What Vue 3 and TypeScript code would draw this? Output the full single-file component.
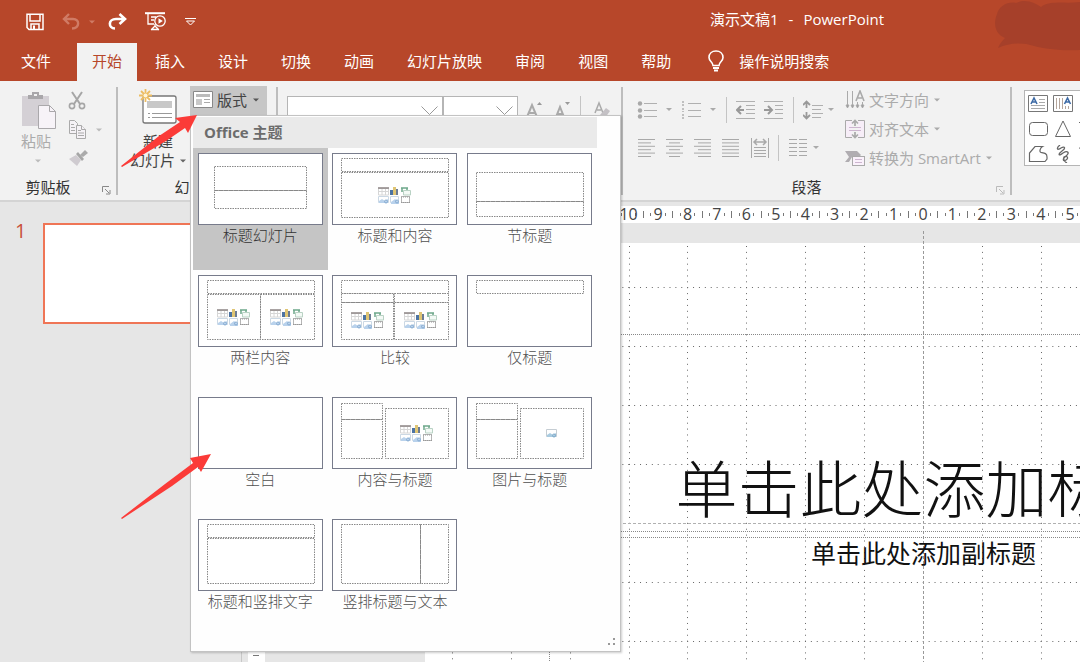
<script setup lang="ts">
import { ref } from 'vue'

type Box = [x: number, y: number, width: number, height: number]

interface SlideLayout {
  name: string
  boxes: Box[]
  media?: [number, number][]
  picture?: [number, number]
}

const tabs = ['文件', '开始', '插入', '设计', '切换', '动画', '幻灯片放映', '审阅', '视图', '帮助']
const activeTab = ref('开始')

const layouts: SlideLayout[] = [
  { name: '标题幻灯片', boxes: [[16, 13, 92, 24], [16, 37, 92, 18]] },
  { name: '标题和内容', boxes: [[9, 5, 107, 13], [9, 19, 107, 45]], media: [[46, 34]] },
  { name: '节标题', boxes: [[9, 19, 107, 29], [9, 48, 107, 15]] },
  { name: '两栏内容', boxes: [[9, 5, 107, 13], [9, 19, 53, 45], [62, 19, 54, 45]], media: [[19, 34], [72, 34]] },
  {
    name: '比较',
    boxes: [[9, 5, 107, 13], [9, 18, 52, 9], [62, 18, 54, 9], [9, 27, 52, 37], [62, 27, 54, 37]],
    media: [[19, 37], [72, 37]],
  },
  { name: '仅标题', boxes: [[9, 5, 107, 13]] },
  { name: '空白', boxes: [] },
  { name: '内容与标题', boxes: [[9, 6, 41, 16], [9, 22, 41, 39], [53, 11, 63, 50]], media: [[68, 28]] },
  { name: '图片与标题', boxes: [[9, 6, 41, 16], [9, 22, 41, 39], [53, 11, 63, 50]], picture: [79, 32] },
  { name: '标题和竖排文字', boxes: [[9, 5, 107, 13], [9, 19, 107, 45]] },
  { name: '竖排标题与文本', boxes: [[9, 5, 79, 59], [88, 5, 28, 59]] },
]
const selectedLayout = ref('标题幻灯片')

const slideWidth = 997
const slideHeight = 561
const centimetre = slideWidth / 33.867
const centreX = slideWidth / 2
const centreY = slideHeight / 2

const marks = (reach: number): number[] => Array.from({ length: reach * 2 + 1 }, (_, i) => i - reach)
const numbers = marks(10).filter((n) => n < 6)
const ticks = marks(64).filter((n) => n % 4 !== 0)
const columns = marks(8).filter((n) => n !== 0)
const rows = marks(4).filter((n) => n !== 0)
const snap = (n: number): number => Math.floor(n) + 0.5

const alignments = [
  { name: '左对齐', lines: [[1, 18], [1, 14], [1, 18], [1, 14], [1, 18], [1, 14]] },
  { name: '居中', lines: [[1, 18], [4, 15], [1, 18], [4, 15], [1, 18], [4, 15]] },
  { name: '右对齐', lines: [[1, 18], [5, 18], [1, 18], [5, 18], [1, 18], [5, 18]] },
  { name: '两端对齐', lines: [[1, 18], [1, 18], [1, 18], [1, 18], [1, 18], [1, 18]] },
]
const linePath = (lines: number[][]): string =>
  lines.map(([from, to], i) => `M${from} ${1.5 + i * 3.4}H${to}`).join('')
</script>

<template>
  <div class="app" lang="zh-CN">
    <header class="top">
      <svg class="stain" width="100" height="54" viewBox="0 0 100 54" aria-hidden="true">
        <path d="M17 14C19 6 28 1 36 3C45 -2 56 3 61 7C70 0 84 4 100 2V50C82 51 66 49 54 46C42 42 29 43 18 48C20 43 23 40 25 38C15 34 13 24 17 14Z" fill="#a6402a" />
      </svg>
      <div class="titlebar">
        <div class="quick">
          <button class="plain" aria-label="保存">
            <svg width="18" height="18" viewBox="0 0 18 18" fill="none" stroke="#fff" stroke-width="1.5"><path d="M1 1.200H17V16.500H3L1 14.500Z" /><path d="M4 1.500V8H14V1.500M5 16V11H13V16" /><path d="M8 12.500V16" stroke-width="2" /></svg>
          </button>
          <span class="split undo">
            <button class="plain" aria-label="撤消">
              <svg width="18" height="17" viewBox="0 0 18 17" fill="none" stroke="#d07b65" stroke-width="2.400"><path d="M7 1L2 6L7 11M2 6H11C18 6 18 15 10 15.500" /></svg>
            </button>
            <svg class="caret" width="6" height="4" viewBox="0 0 8 4"><path d="M0 0H8L4 4Z" fill="#d07b65" /></svg>
          </span>
          <button class="plain redo" aria-label="恢复">
            <svg width="19" height="17" viewBox="0 0 19 17" fill="none" stroke="#fff" stroke-width="2.600"><path d="M11.500 1L17 6L11.500 11M17 6H8C0 6 0 15 7 15.500" /></svg>
          </button>
          <button class="plain show" aria-label="从头开始放映">
            <svg width="22" height="19" viewBox="0 0 22 19" fill="none" stroke="#fff" stroke-width="1.300"><path d="M0 1.200H20" stroke-width="2" /><path d="M3 2V12H9M6 5H11M6 8H9M10 12V14L6 18M10 14L14 18M6 17.500H14" /><circle cx="15" cy="9" r="5.200" /><path d="M13.500 6.200L17.800 9L13.500 11.800Z" fill="#fff" stroke="none" /></svg>
          </button>
          <button class="plain more" aria-label="自定义快速访问工具栏">
            <svg width="11" height="8" viewBox="0 0 11 8" fill="none" stroke="#fff"><path d="M0 .500H11M1.500 3L5.500 7L9.500 3Z" /></svg>
          </button>
        </div>
        <h1 class="doc"><span>演示文稿1</span><span>-</span><span>PowerPoint</span></h1>
      </div>
      <nav class="tabs">
        <button v-for="tab in tabs" :key="tab" class="tab" :class="{ active: tab === activeTab }" @click="activeTab = tab">{{ tab }}</button>
        <button class="tell">
          <svg width="16" height="22" viewBox="0 0 16 22" fill="none" stroke="#fff" stroke-width="1.600"><path d="M5 15.500C5 12 1 11.500 1 7.500C1 3.500 4 1 8 1S15 3.500 15 7.500C15 11.500 11 12 11 15.500Z" /><path d="M5 18H11M6 20.500H10" stroke-width="2" /></svg>
          操作说明搜索
        </button>
      </nav>
    </header>

    <section class="ribbon" aria-label="开始">
      <div class="group clipboard">
        <div class="body">
          <button class="plain paste">
            <svg width="36" height="40" viewBox="0 0 36 40"><path d="M1 5H28V35H1Z" fill="#d4d0d5" /><path d="M7 4H11V1H18V4H22V8H7Z" fill="#a9a7aa" /><path d="M13 3H16V5H13Z" fill="#f2f2f2" /><path d="M17.500 14.500H28.500L34.500 20.500V37.500H17.500Z" fill="#f7f3f8" stroke="#aaa8ab" /><path d="M28.500 14.500V20.500H34.500" fill="none" stroke="#aaa8ab" /></svg>
            <span>粘贴</span>
            <svg class="caret" width="6" height="4" viewBox="0 0 8 4"><path d="M0 0H8L4 4Z" fill="#bbb" /></svg>
          </button>
          <div class="edits">
            <button class="plain" aria-label="剪切"><svg width="18" height="19" viewBox="0 0 18 19" fill="none" stroke="#a6a6a6" stroke-width="1.600"><path d="M4 1L12 13M14 1L6 13" stroke-width="2" /><circle cx="4" cy="15" r="2.600" /><circle cx="14" cy="15" r="2.600" /></svg></button>
            <span class="split copy">
              <button class="plain" aria-label="复制"><svg width="18" height="19" viewBox="0 0 18 19" fill="#f5f2f6" stroke="#aaa"><path d="M1.500 .500H6.500L9.500 3.500V13.500H1.500Z" /><path d="M3 4.500H6M3 7.500H7M3 10.500H7" /><path d="M8.500 5.500H13.500L17.500 9.500V18.500H8.500Z" /><path d="M13.500 5.500V9.500H17.500M10 10.500H13M10 13H16M10 15.500H16" /></svg></button>
              <svg class="caret" width="6" height="4" viewBox="0 0 8 4"><path d="M0 0H8L4 4Z" fill="#bbb" /></svg>
            </span>
            <button class="plain" aria-label="格式刷"><svg width="20" height="18" viewBox="0 0 20 18"><path d="M1 10L8 6L13 11L9 17Z" fill="#cfcbd0" /><path d="M8 5L10 3L16 10L14 12Z" fill="#a6a6a6" /><path d="M12 6L17 1L20 4L15 8Z" fill="#aaa" /></svg></button>
          </div>
        </div>
        <div class="caption">剪贴板<button class="plain launcher" aria-label="剪贴板选项"><svg width="9" height="9" viewBox="0 0 9 9" fill="none" stroke="#888"><path d="M.500 6V.500H7M3 3L7 7M8 4V8H4" /></svg></button></div>
      </div>
      <div class="divider"></div>

      <div class="group slides">
        <div class="body">
          <button class="plain new">
            <svg width="40" height="36" viewBox="0 0 40 36"><rect x="5" y="7" width="33" height="27" rx="2" fill="#fff" stroke="#777" stroke-width="1.300" /><path d="M9 12H34V19H9Z" fill="#c8c8c8" /><path d="M10 24.500H12M14 24.500H34M10 28.500H12M14 28.500H34" stroke="#999" /><path d="M7.500 0V13M1 6.500H14M3 2L12 11M12 2L3 11" stroke="#edbd62" stroke-width="1.800" /><circle cx="7.500" cy="6.500" r="2" fill="#fff5d9" /></svg>
            <span>新建</span>
            <span class="split">幻灯片<svg class="caret" width="6" height="4" viewBox="0 0 8 4"><path d="M0 0H8L4 4Z" fill="#666" /></svg></span>
          </button>
          <div class="layout">
            <button class="layout-button" aria-haspopup="true" aria-expanded="true">
              <svg width="20" height="17" viewBox="0 0 20 17"><path d="M.500 .500H19.500V16.500H.500Z" fill="#fff" stroke="#888" /><path d="M3 3H17V6H3Z" fill="#bbb" /><path d="M3 8H9V14H3Z" fill="#c8c8c8" /><path d="M11 8.500H17M11 11.500H17" stroke="#aaa" /></svg>
              版式
              <svg class="caret" width="6" height="4" viewBox="0 0 8 4"><path d="M0 0H8L4 4Z" fill="#555" /></svg>
            </button>
            <div class="popup">
              <h2 class="theme">Office 主题</h2>
              <div class="gallery">
                <button v-for="item in layouts" :key="item.name" class="choice" :class="{ selected: item.name === selectedLayout }" @click="selectedLayout = item.name">
                  <svg class="preview" width="125" height="72" viewBox="0 0 125 72">
                    <rect x=".500" y=".500" width="124" height="71" fill="#fff" stroke="#777b8b" />
                    <g fill="none" stroke="#888" stroke-dasharray="1.500 1">
                      <rect v-for="(box, i) in item.boxes" :key="i" :x="box[0] + 0.5" :y="box[1] + 0.5" :width="box[2]" :height="box[3]" />
                    </g>
                    <g v-for="(spot, i) in item.media" :key="'m' + i" :transform="`translate(${spot[0]} ${spot[1]})`" fill="none">
                      <path d="M.500 1.500H10.500V8H.500ZM.500 4.500H10.500M4 2V8M7.500 2V8" stroke="#d6d6d6" /><path d="M0 1H11" stroke="#8d8584" stroke-width="1.500" />
                      <path d="M13.500 3V8" stroke="#4d74a3" stroke-width="3" /><path d="M16.500 0V8" stroke="#dfc574" stroke-width="3" /><path d="M19 2V8" stroke="#6c7c94" stroke-width="2" />
                      <path d="M25.500 3.500H32.500V8H25.500Z" fill="#f4faf6" stroke="#b9d2c4" /><path d="M23 1H30M24 1V5M29 1V3" stroke="#6ea88b" stroke-width="1.500" />
                      <path d="M.500 9.500H10.500V15.500H.500ZM12.500 9.500H20.500V15.500H12.500Z" stroke="#cbd8e4" /><path d="M1 14L4 12L7 14L10 12V16H1ZM13 15L17 12L21 15V17H13Z" fill="#b9d2ec" /><circle cx="8" cy="14.500" r="1.500" stroke="#86abd0" /><circle cx="19" cy="14.500" r="1.500" stroke="#86abd0" />
                      <path d="M23.500 9.500H31.500V15.500H23.500Z" stroke="#b5b5b5" /><path d="M23 10H32M23 15.500H32" stroke="#999" stroke-dasharray="1 1" />
                    </g>
                    <g v-if="item.picture" :transform="`translate(${item.picture[0]} ${item.picture[1]})`" fill="none"><path d="M.500 .500H10.500V7.500H.500Z" stroke="#c5cdd3" /><path d="M1 6L4 4L7 6L10 4V8H1Z" fill="#a9cbe0" /><circle cx="8" cy="6.500" r="1.500" stroke="#7da9c9" /></g>
                  </svg>
                  <span>{{ item.name }}</span>
                </button>
              </div>
              <svg class="grip" width="8" height="8" viewBox="0 0 8 8"><path d="M6 0H8V2H6ZM6 5H8V7H6ZM1 5H3V7H1Z" fill="#999" /></svg>
            </div>
          </div>
        </div>
        <div class="caption">幻灯片</div>
      </div>
      <div class="divider"></div>

      <div class="group font">
        <div class="body">
          <span class="combo family"><select aria-label="字体"><option></option></select><svg width="17" height="9" viewBox="0 0 17 9" fill="none" stroke="#999"><path d="M.500 .500L8.500 8.500L16.500 .500" /></svg></span>
          <span class="combo size"><select aria-label="字号"><option></option></select><svg width="17" height="9" viewBox="0 0 17 9" fill="none" stroke="#999"><path d="M.500 .500L8.500 8.500L16.500 .500" /></svg></span>
          <button class="plain grow" aria-label="增大字号"><svg width="16" height="18" viewBox="0 0 16 18" fill="none" stroke="#aaa" stroke-width="2"><path d="M1 16L6 4L11 16M3 12H9" /><path d="M11 4L13.500 1L16 4Z" fill="#999" stroke="none" /></svg></button>
          <button class="plain shrink" aria-label="减小字号"><svg width="16" height="18" viewBox="0 0 16 18" fill="none" stroke="#aaa" stroke-width="2"><path d="M1 16L5 6L9 16M3 13H7" /><path d="M10 1H15L12.500 4Z" fill="#999" stroke="none" /></svg></button>
          <i class="bar"></i>
          <button class="plain clear" aria-label="清除所有格式"><svg width="18" height="18" viewBox="0 0 18 18" fill="none" stroke="#aaa" stroke-width="1.500"><path d="M1 12L5 2L9 12M3 9H7" /><path d="M6 14L12 7L16 10L11 17H8Z" fill="#c4c1c5" stroke="none" /></svg></button>
        </div>
      </div>
      <div class="divider"></div>

      <div class="group paragraph">
        <div class="body">
          <div class="tools">
            <div class="tool-row">
              <button class="plain" aria-label="项目符号"><svg width="20" height="20" viewBox="0 0 20 20" stroke="#b0b0b0"><path d="M7 3.500H20M7 10.500H20M7 16.500H20" /><g fill="#a8a8a8" stroke="none"><circle cx="3" cy="3.500" r="2.200" /><circle cx="3" cy="10.500" r="2.200" /><circle cx="3" cy="16.500" r="2.200" /></g></svg></button>
              <svg class="caret" width="8" height="4" viewBox="0 0 8 4"><path d="M1 0H7L4 3Z" fill="#aaa" /></svg>
              <button class="plain" aria-label="编号"><svg width="20" height="20" viewBox="0 0 20 20" stroke="#b0b0b0"><path d="M7 3.500H20M7 10.500H20M7 16.500H20" /><path d="M2 1V6M2 8V12M2 14V19" stroke-width="1.500" stroke-dasharray="2 1" /></svg></button>
              <svg class="caret" width="8" height="4" viewBox="0 0 8 4"><path d="M1 0H7L4 3Z" fill="#aaa" /></svg>
              <i class="bar"></i>
              <button class="plain" aria-label="降低列表级别"><svg width="20" height="20" viewBox="0 0 20 20" fill="none" stroke="#b0b0b0"><path d="M0 1.500H19M10 5.500H19M10 9.500H19M10 13.500H19M0 18.500H19" /><path d="M8 10H1M5 6L1 10L5 14" stroke="#999" stroke-width="2" /></svg></button>
              <button class="plain" aria-label="提高列表级别"><svg width="20" height="20" viewBox="0 0 20 20" fill="none" stroke="#b0b0b0"><path d="M0 1.500H19M11 5.500H19M11 9.500H19M11 13.500H19M0 18.500H19" /><path d="M0 10H8M4 6L8 10L4 14" stroke="#999" stroke-width="2" /></svg></button>
              <i class="bar"></i>
              <span class="split tight">
                <button class="plain" aria-label="行距"><svg width="20" height="20" viewBox="0 0 20 20" fill="none" stroke="#b0b0b0"><path d="M9 5.500H20M9 9.500H18M9 13.500H20M9 17.500H18" /><path d="M3.500 2V8M0 5L3.500 1.500L7 5M3.500 12V18M0 15L3.500 18.500L7 15" stroke="#999" stroke-width="1.800" /></svg></button>
                <svg class="caret" width="8" height="4" viewBox="0 0 8 4"><path d="M1 0H7L4 3Z" fill="#aaa" /></svg>
              </span>
            </div>
            <div class="tool-row">
              <button v-for="a in alignments" :key="a.name" class="plain" :aria-label="a.name"><svg width="20" height="20" viewBox="0 0 20 20" stroke="#a9a9a9"><path :d="linePath(a.lines)" /></svg></button>
              <button class="plain" aria-label="分散对齐"><svg width="20" height="20" viewBox="0 0 20 20" fill="none" stroke="#a9a9a9"><path d="M2.500 0V20M19.500 0V20M5 9.500H17M5 12.500H17M5 15.500H17M5 18.500H17" /><path d="M5 4H17M8 1L5 4L8 7M14 1L17 4L14 7" stroke-width="1.500" /></svg></button>
              <i class="bar"></i>
              <span class="split tight">
                <button class="plain" aria-label="分栏"><svg width="20" height="20" viewBox="0 0 20 20" stroke="#a9a9a9"><path d="M1 1.500H9M11 1.500H19M1 5.500H9M11 5.500H19M1 9.500H9M11 9.500H19M1 13.500H9M11 13.500H19M1 17.500H9M11 17.500H19" /></svg></button>
                <svg class="caret" width="8" height="4" viewBox="0 0 8 4"><path d="M1 0H7L4 3Z" fill="#aaa" /></svg>
              </span>
            </div>
          </div>
          <div class="texts">
            <button class="plain text-tool"><svg width="20" height="20" viewBox="0 0 20 20" fill="none" stroke="#aaa"><path d="M2.500 1V17M7.500 1V17M12.500 12V17M17.500 12V17" /><path d="M1 15L2.500 18L4 15ZM6 15L7.500 18L9 15ZM11 15L12.500 18L14 15ZM16 15L17.500 18L19 15Z" fill="#999" /><path d="M11 11L15 1L19 11M13 8H17" stroke-width="1.600" /></svg>文字方向<svg class="caret" width="6" height="4" viewBox="0 0 8 4"><path d="M0 0H8L4 4Z" fill="#aaa" /></svg></button>
            <button class="plain text-tool"><svg width="20" height="20" viewBox="0 0 20 20" fill="none" stroke="#aaa"><path d="M7 1.500H.500V18.500H7M13 1.500H19.500V18.500H13" fill="#f7eef8" /><path d="M4 8.500H16M4 11.500H16" stroke="#cdb6cf" /><path d="M10 7V2M7 4.500L10 1.500L13 4.500M10 13V18M7 15.500L10 18.500L13 15.500" stroke-width="1.700" /></svg>对齐文本<svg class="caret" width="6" height="4" viewBox="0 0 8 4"><path d="M0 0H8L4 4Z" fill="#aaa" /></svg></button>
            <button class="plain text-tool"><svg width="20" height="20" viewBox="0 0 20 20"><path d="M0 3H12L16 7L14 9H7L4 14H0L4 9Z" fill="#b0adb1" /><rect x="7.500" y="8.500" width="12" height="9" fill="#faf1fb" stroke="#aaa" /><path d="M10 11.500H17M10 14.500H17" stroke="#cdb6cf" /></svg>转换为 SmartArt<svg class="caret" width="6" height="4" viewBox="0 0 8 4"><path d="M0 0H8L4 4Z" fill="#aaa" /></svg></button>
          </div>
        </div>
        <div class="caption">段落<button class="plain launcher" aria-label="段落选项"><svg width="9" height="9" viewBox="0 0 9 9" fill="none" stroke="#bbb"><path d="M.500 6V.500H7M3 3L7 7M8 4V8H4" /></svg></button></div>
      </div>
      <div class="divider"></div>

      <div class="group drawing">
        <div class="shapes">
          <button class="plain" aria-label="文本框"><svg width="20" height="18" viewBox="0 0 20 18" fill="none" stroke="#777"><path d="M.500 .500H19.500V16.500H.500Z" /><path d="M11 4.500H17M11 7.500H17M3 10.500H17M3 13.500H17" stroke="#aaa" /><path d="M3 9L6 3L9 9M4 7H8" stroke="#3d6aa5" stroke-width="1.600" /></svg></button>
          <button class="plain" aria-label="竖排文本框"><svg width="20" height="18" viewBox="0 0 20 18" fill="none" stroke="#777"><path d="M.500 .500H19.500V16.500H.500Z" /><path d="M3.500 3V14M6.500 3V14M9.500 3V14M12.500 11V14M15.500 11V14" stroke="#b5a69c" /><path d="M11.500 9L14.500 3L17.500 9M12.500 7H16.500" stroke="#3d6aa5" stroke-width="1.600" /></svg></button>
          <button class="plain" aria-label="矩形"><svg width="20" height="18" viewBox="0 0 20 18" fill="none" stroke="#666"><path d="M4 .500H19.500V16.500H4Z" /></svg></button>
          <button class="plain" aria-label="圆角矩形"><svg width="20" height="18" viewBox="0 0 20 18" fill="none" stroke="#666"><rect x="1.500" y="2.500" width="18" height="13" rx="3" /></svg></button>
          <button class="plain" aria-label="等腰三角形"><svg width="20" height="18" viewBox="0 0 20 18" fill="none" stroke="#666"><path d="M10 1L17.500 16.500H2.500Z" /></svg></button>
          <button class="plain" aria-label="肘形连接符"><svg width="20" height="18" viewBox="0 0 20 18" fill="none" stroke="#666"><path d="M1 2.500H10V14H18" /></svg></button>
          <button class="plain" aria-label="任意多边形"><svg width="20" height="18" viewBox="0 0 20 18" fill="none" stroke="#666" stroke-width="1.200"><path d="M1.500 16.500V8L7 1.500H14.500C12 3 11 7 13 7.500C16 8 19 8 19 12V14L17 16.500Z" /></svg></button>
          <button class="plain" aria-label="自由曲线"><svg width="20" height="18" viewBox="0 0 20 18" fill="none" stroke="#666" stroke-width="1.300"><path d="M7 0C3 3 4 6 8 3C12 1 13 3 9 6C5 9 5 12 10 8C15 5 17 8 13 11C9 14 10 17 13 15C16 13 14 10 11 12C10 15 12 17 14 18" /></svg></button>
          <button class="plain" aria-label="曲线"><svg width="20" height="18" viewBox="0 0 20 18" fill="none" stroke="#666"><path d="M1 3C10 3 8 15 18 15" /></svg></button>
        </div>
      </div>
    </section>

    <main class="workspace">
      <aside class="pages">
        <span class="page-number">1</span>
        <button class="page" aria-label="幻灯片 1"></button>
      </aside>
      <section class="editor">
        <svg class="ruler across" width="100%" height="17" aria-hidden="true">
          <g transform="translate(658 0)">
            <path v-for="n in ticks" :key="n" :d="n % 2 ? 'M0 7V10' : 'M0 5V12'" :transform="`translate(${snap((n * centimetre) / 4)} 0)`" stroke="#777" />
            <text v-for="n in numbers" :key="n" :x="n * centimetre" y="14">{{ Math.abs(n) }}</text>
          </g>
        </svg>
        <svg class="ruler down" width="17" height="100%" aria-hidden="true">
          <g transform="translate(0 300)">
            <path v-for="n in ticks" :key="n" :d="n % 2 ? 'M7 0H10' : 'M5 0H11'" :transform="`translate(0 ${snap((n * centimetre) / 4)})`" stroke="#777" />
          </g>
        </svg>
        <div class="canvas">
          <article class="slide">
            <svg class="grid" :width="slideWidth" :height="slideHeight" aria-hidden="true">
              <g stroke="#666" stroke-dasharray="1 4.890">
                <path v-for="n in columns" :key="'c' + n" :d="`M${snap(centreX + n * 2 * centimetre)} 3V${slideHeight}`" />
                <path v-for="n in rows" :key="'r' + n" :d="`M3 ${snap(centreY + n * 2 * centimetre)}H${slideWidth}`" />
              </g>
              <g stroke="#999" stroke-dasharray="3 2">
                <path :d="`M${snap(centreX)} -12V${slideHeight + 12}`" />
                <path :d="`M-12 ${snap(centreY)}H${slideWidth + 12}`" stroke="#b0b0b0" />
              </g>
            </svg>
            <div class="holder heading">单击此处添加标题</div>
            <div class="holder sub">单击此处添加副标题</div>
          </article>
        </div>
      </section>
    </main>

    <svg class="pointers" width="220" height="530" viewBox="0 0 220 530" fill="#fb3b38" aria-hidden="true">
      <path d="M197 115L175 118L180 122L159 136L121 166L122 167L166 141L185 128L188 133Z" />
      <path d="M211 454L190 458L193 463L165 484L121 518L122 519L172 486L198 467L201 472Z" />
    </svg>
  </div>
</template>

<style>
html,
body {
  margin: 0;
  overflow: hidden;
}
</style>

<style scoped>
.app {
  position: relative;
  display: flex;
  flex-direction: column;
  height: 100vh;
  overflow: hidden;
  background: #e6e6e6;
  color: #444;
  font: 15px/20px "Open Sans", "Noto Sans CJK SC", sans-serif;
}
.app * {
  box-sizing: border-box;
}
svg {
  display: block;
  flex: none;
}
button {
  font: inherit;
  color: inherit;
}
.plain {
  display: block;
  padding: 0;
  border: 0;
  background: none;
}
.split {
  display: flex;
  align-items: center;
}
.top {
  position: relative;
  background: #b7472a;
  color: #fff;
}
.stain {
  position: absolute;
  top: 0;
  right: 0;
}
.titlebar {
  display: flex;
  align-items: center;
  height: 43px;
  padding-left: 26px;
}
.quick {
  display: flex;
  align-items: center;
  width: 684px;
}
.undo {
  gap: 9px;
  margin: 0 13px 0 18px;
}
.show {
  margin-left: 18px;
}
.more {
  margin-left: 18px;
}
.doc {
  display: flex;
  gap: 10px;
  margin: 0;
  padding-bottom: 6px;
  font-size: 15px;
  font-weight: 400;
}
.tabs {
  position: relative;
  display: flex;
  gap: 3px;
  height: 38px;
  padding-left: 6px;
}
.tab {
  padding: 0 15px 2px;
  border: 0;
  background: none;
}
.tab:first-child {
  margin-right: 8px;
}
.tab.active {
  background: #f2f2f2;
  color: #b7472a;
}
.tell {
  display: flex;
  align-items: center;
  gap: 15px;
  margin-left: 19px;
  padding: 0 0 2px;
  border: 0;
  background: none;
}
.ribbon {
  position: relative;
  z-index: 2;
  display: flex;
  height: 121px;
  border-bottom: 2px solid #d4d4d4;
  background: #f2f2f2;
}
.divider {
  flex: none;
  width: 2px;
  margin: 6px 0 5px;
  background: #bdbdbd;
}
.group {
  display: flex;
  flex: none;
  flex-direction: column;
}
.body {
  display: flex;
  flex: 1;
}
.caption {
  position: relative;
  height: 24px;
  color: #333;
  line-height: 22px;
  text-align: center;
}
.launcher {
  position: absolute;
  top: 10px;
  right: 5px;
}
.clipboard {
  width: 116px;
}
.clipboard .body {
  padding: 10px 0 0 21px;
}
.clipboard .caption {
  padding-right: 20px;
}
.paste {
  display: flex;
  flex-direction: column;
  align-items: flex-start;
  color: #ababab;
}
.paste .caret {
  margin: 8px 0 0 14px;
}
.edits {
  display: flex;
  flex-direction: column;
  gap: 10px;
  margin-left: 11px;
}
.copy {
  gap: 10px;
}
.slides {
  width: 158px;
}
.new {
  display: flex;
  flex-direction: column;
  align-items: center;
  width: 72px;
  padding: 8px 0 0 8px;
}
.new > span {
  height: 19px;
  margin-top: 7px;
  line-height: 19px;
}
.new > .split {
  gap: 5px;
  margin-top: 0;
}
.layout {
  position: relative;
  height: 29px;
  margin-top: 5px;
}
.layout-button {
  display: flex;
  align-items: center;
  gap: 4px;
  width: 77px;
  height: 29px;
  padding: 0 0 2px 3px;
  border: 0;
  background: #c6c6c6;
}
.layout-button .caret {
  margin-left: 2px;
}
.popup {
  position: absolute;
  z-index: 5;
  top: 100%;
  left: 0;
  width: 431px;
  padding: 1px 23px 15px 2px;
  border: 1px solid #c3c3c3;
  background: #fefefe;
  box-shadow: 1px 1px 2px #0003;
}
.theme {
  height: 31px;
  margin: 0;
  padding-left: 11px;
  background: #eaeaea;
  color: #6c6c6c;
  font-size: 15px;
  font-weight: 700;
  line-height: 31px;
}
.gallery {
  display: grid;
  grid-template-columns: repeat(3, 1fr);
}
.choice {
  display: flex;
  flex-direction: column;
  align-items: center;
  height: 122px;
  padding: 5px 0 0;
  border: 0;
  background: none;
  color: #505050;
}
.choice.selected {
  background: #c5c5c5;
  color: #333;
}
.choice span {
  line-height: 20px;
  font-weight: 300;
}
.grip {
  position: absolute;
  right: 5px;
  bottom: 5px;
}
.font {
  width: 343px;
}
.font .body {
  align-items: flex-start;
  padding: 15px 0 0 9px;
}
.combo {
  position: relative;
  height: 26px;
}
.combo select {
  width: 100%;
  height: 100%;
  border: 1px solid #b5b5b5;
  border-radius: 0;
  appearance: none;
  background: #fff;
}
.combo svg {
  position: absolute;
  top: 10px;
  right: 5px;
}
.family {
  width: 156px;
}
.size {
  width: 75px;
}
.grow {
  margin: 5px 0 0 8px;
}
.shrink {
  margin: 5px 0 0 13px;
}
.clear {
  margin: 5px 0 0 12px;
}
.bar {
  width: 1px;
  height: 26px;
  margin: 0 1px;
  background: #c4c4c4;
}
.font .bar {
  margin-left: 9px;
}
.paragraph {
  width: 387px;
}
.paragraph .body {
  display: grid;
  grid-template-columns: 208px 1fr;
  padding: 5px 0 0 14px;
}
.tools {
  padding-top: 5px;
}
.tool-row {
  display: flex;
  align-items: center;
  gap: 8px;
  height: 38px;
}
.tight {
  gap: 4px;
}
.paragraph .caption {
  padding-right: 20px;
}
.text-tool {
  display: flex;
  align-items: center;
  gap: 4px;
  height: 29px;
  padding-bottom: 2px;
  color: #ababab;
  white-space: nowrap;
}
.text-tool .caret {
  margin-left: 1px;
}
.drawing {
  flex: 1;
  overflow: hidden;
}
.shapes {
  display: grid;
  grid-template-columns: repeat(3, 20px);
  gap: 7px 5px;
  width: 160px;
  height: 76px;
  margin: 9px 0 0 12px;
  padding: 4px 3px;
  border: 1px solid #b5b5b5;
  background: #fff;
}
.workspace {
  display: flex;
  flex: 1;
  min-height: 0;
}
.pages {
  display: flex;
  flex: none;
  align-items: flex-start;
  gap: 16px;
  width: 242px;
  padding: 21px 0 0 15px;
  border-right: 1px solid #c8c8c8;
}
.page-number {
  width: 12px;
  color: #c9513a;
  font-size: 20px;
  line-height: 16px;
}
.page {
  width: 178px;
  height: 101px;
  padding: 0;
  border: 2px solid #ef7556;
  background: #fff;
}
.editor {
  display: grid;
  flex: 1;
  grid-template: 17px 1fr / 17px 1fr;
  min-width: 0;
  padding: 4px 0 0 6px;
  overflow: hidden;
}
.ruler {
  overflow: hidden;
  background: #fff;
}
.across {
  grid-area: 1 / 2;
}
.across text {
  fill: #444;
  font-size: 16px;
  text-anchor: middle;
}
.down {
  grid-area: 2 / 1;
}
.canvas {
  grid-area: 2 / 2;
  min-width: 0;
  min-height: 0;
  overflow: hidden;
}
.slide {
  position: relative;
  display: flex;
  flex-direction: column;
  align-items: center;
  width: 997px;
  height: 561px;
  margin: 20px 0 0 160px;
  padding-top: 91px;
  background: #fff;
  color: #111;
}
.grid {
  position: absolute;
  inset: 0;
  overflow: visible;
}
.holder {
  position: relative;
  width: 749px;
  border: 1px dotted #888;
  text-align: center;
}
.heading {
  height: 198px;
  padding-top: 114px;
  font-size: 62px;
  font-weight: 300;
  line-height: 80px;
}
.sub {
  height: 136px;
  margin-top: 5px;
  font-size: 25px;
  line-height: 30px;
}
.pointers {
  position: absolute;
  z-index: 3;
  top: 0;
  left: 0;
  pointer-events: none;
}
</style>
